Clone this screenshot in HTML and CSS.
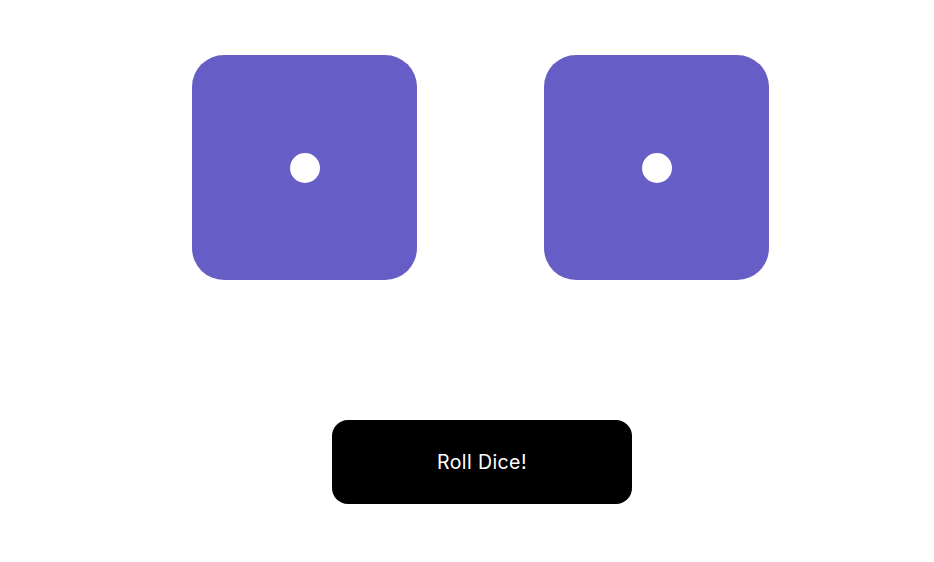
FILE: index.html
```html
<!DOCTYPE html>
<html>
<head>
<meta charset="utf-8">
<link rel="stylesheet" href="styles.css">
</head>
<body>
<main class="app">
  <div class="dice-row">
    <div class="die"><span class="pip"></span></div>
    <div class="die"><span class="pip"></span></div>
  </div>
  <button class="roll">Roll Dice!</button>
</main>
</body>
</html>
```

FILE: styles.css
```css
html, body {
  margin: 0;
  padding: 0;
  background: #ffffff;
}
.app {
  width: 934px;
  height: 562px;
  display: flex;
  flex-direction: column;
  align-items: flex-start;
  font-family: Inter, "Noto Sans", sans-serif;
}
.dice-row {
  display: flex;
  gap: 127px;
  padding-top: 55px;
  padding-left: 192px;
}
.die {
  width: 225px;
  height: 225px;
  background: #675dc6;
  border-radius: 32px;
  display: flex;
  align-items: center;
  justify-content: center;
}
.pip {
  width: 30px;
  height: 30px;
  border-radius: 50%;
  background: #ffffff;
}
.roll {
  margin-top: 140px;
  margin-left: 332px;
  width: 300px;
  height: 84px;
  border: none;
  border-radius: 16px;
  background: #000000;
  color: #ffffff;
  font-family: Inter, "Noto Sans", sans-serif;
  font-size: 19.5px;
  font-weight: 400;
  letter-spacing: 0.4px;
  padding: 0;
}
```
